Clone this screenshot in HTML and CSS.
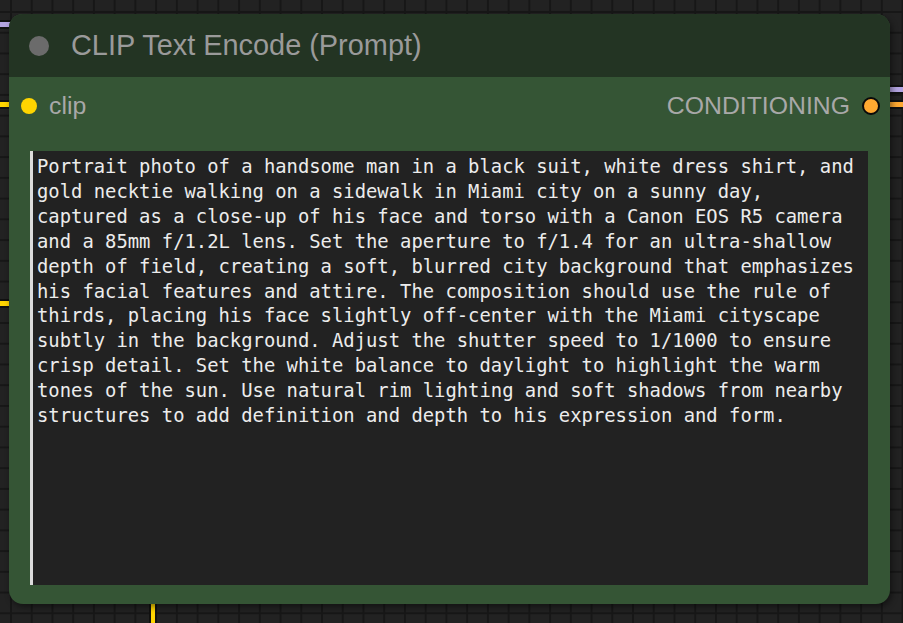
FILE: index.html
```html
<!DOCTYPE html>
<html lang="en">
<head>
    <meta charset="UTF-8">
    <meta name="viewport" content="width=device-width, initial-scale=1.0">
    <title>CLIP Text Encode (Prompt)</title>
    <link rel="stylesheet" href="styles.css">
</head>
<body>
    <div id="canvas">
        <!-- links coming into / out of the node -->
        <div class="wire wire-h wire-purple" style="left: 0; top: 22px; width: 14px;"></div>
        <div class="wire wire-h wire-yellow" style="left: 0; top: 102px; width: 14px;"></div>
        <div class="wire wire-h wire-yellow" style="left: 0; top: 301px; width: 14px;"></div>
        <div class="wire wire-h wire-purple" style="left: 886px; top: 87px; width: 20px;"></div>
        <div class="wire wire-h wire-orange" style="left: 886px; top: 102px; width: 20px;"></div>
        <div class="wire wire-v wire-yellow" style="left: 151px; top: 598px; height: 30px;"></div>

        <div class="node">
            <div class="node-title">
                <span class="collapse-dot"></span>
                <span class="title-text">CLIP Text Encode (Prompt)</span>
            </div>
            <div class="node-body">
                <div class="slots">
                    <div class="slot slot-in">
                        <span class="slot-dot dot-clip"></span>
                        <span class="slot-label">clip</span>
                    </div>
                    <div class="slot slot-out">
                        <span class="slot-label">CONDITIONING</span>
                        <span class="slot-dot dot-cond"></span>
                    </div>
                </div>
                <textarea class="prompt" spellcheck="false">Portrait photo of a handsome man in a black suit, white dress shirt, and
gold necktie walking on a sidewalk in Miami city on a sunny day,
captured as a close-up of his face and torso with a Canon EOS R5 camera
and a 85mm f/1.2L lens. Set the aperture to f/1.4 for an ultra-shallow
depth of field, creating a soft, blurred city background that emphasizes
his facial features and attire. The composition should use the rule of
thirds, placing his face slightly off-center with the Miami cityscape
subtly in the background. Adjust the shutter speed to 1/1000 to ensure
crisp detail. Set the white balance to daylight to highlight the warm
tones of the sun. Use natural rim lighting and soft shadows from nearby
structures to add definition and depth to his expression and form.</textarea>
            </div>
        </div>
    </div>
</body>
</html>
```

FILE: styles.css
```css
html, body {
    margin: 0;
    padding: 0;
    height: 100%;
    overflow: hidden;
}
body {
    font-family: "Liberation Sans", Arial, sans-serif;
    background-color: #222;
    background-image:
        linear-gradient(to right, #171717 2px, transparent 2px),
        linear-gradient(to bottom, #171717 2px, transparent 2px);
    background-size: 20.74px 20.74px;
    background-position: 10px 11px;
}
#canvas {
    position: relative;
    width: 903px;
    height: 623px;
}

/* links */
.wire {
    position: absolute;
    box-shadow: 0 0 0 2px #111;
}
.wire-h {
    height: 5px;
}
.wire-v {
    width: 4px;
}
.wire-purple {
    background: #b3a3e0;
}
.wire-yellow {
    background: #ffd500;
}
.wire-orange {
    background: #ffa931;
}

/* node */
.node {
    position: absolute;
    left: 9px;
    top: 14px;
    width: 881px;
    height: 590px;
    border-radius: 14px;
    background: #355535;
    overflow: hidden;
    display: flex;
    flex-direction: column;
    box-shadow: 2px 3px 6px rgba(0, 0, 0, 0.45);
}
.node-title {
    height: 63px;
    flex: none;
    background: #233423;
    display: flex;
    align-items: center;
    padding-left: 20px;
    gap: 22px;
}
.collapse-dot {
    width: 20px;
    height: 20px;
    border-radius: 50%;
    background: #6b6b6b;
}
.title-text {
    font-size: 28.9px;
    color: #9a9a9a;
    white-space: nowrap;
}
.node-body {
    flex: 1;
    display: flex;
    flex-direction: column;
}
.slots {
    height: 56px;
    margin-top: 1px;
    display: flex;
    align-items: center;
    justify-content: space-between;
    padding: 0 10px 0 12px;
}
.slot {
    display: flex;
    align-items: center;
    gap: 12px;
}
.slot-label {
    font-size: 24.8px;
    color: #a8a8a8;
}
.slot-dot {
    border-radius: 50%;
    box-sizing: border-box;
}
.dot-clip {
    width: 16px;
    height: 16px;
    background: #ffd500;
}
.dot-cond {
    width: 18px;
    height: 18px;
    background: #ffa931;
    border: 2px solid #0a0a0a;
}
.prompt {
    display: block;
    margin: 17px 22px 19px 21px;
    height: 434px;
    box-sizing: border-box;
    border: none;
    border-left: 3px solid #dcdcdc;
    background: #222;
    color: #ececec;
    font-family: "DejaVu Sans Mono", "Liberation Mono", monospace;
    font-size: 18.85px;
    line-height: 24.9px;
    padding: 4px 4px 0 4px;
    resize: none;
    outline: none;
    overflow: hidden;
    white-space: pre-wrap;
}
```
